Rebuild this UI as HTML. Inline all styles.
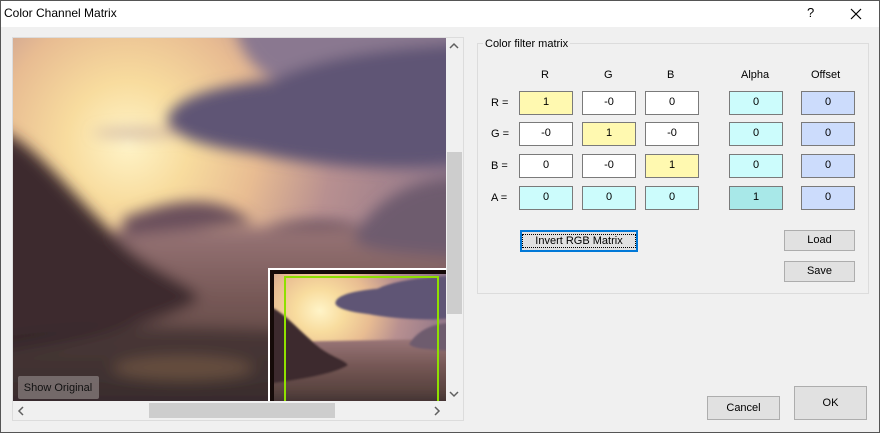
<!DOCTYPE html>
<html><head><style>
*{box-sizing:border-box;margin:0;padding:0}
body{width:880px;height:433px;background:#f0f0f0;font-family:"Liberation Sans",sans-serif;font-size:11px;color:#000;position:relative;overflow:hidden}
.frame{position:absolute;left:0;top:0;width:880px;height:433px;border:1px solid #555;pointer-events:none}
.title{position:absolute;left:0;top:0;width:880px;height:27px;background:#fff;font-size:12px}
.a{position:absolute}
.cell{position:absolute;width:54px;height:24px;border:1px solid #7a7a7a;text-align:center;line-height:21px;font-size:11px}
.y{background:#fff9b0}.w{background:#fff}.c{background:#ccfcfc}.o{background:#ccdcfc}.d{background:#a8e8e8}
.btn{position:absolute;background:#e1e1e1;border:1px solid #adadad;text-align:center;font-size:11px}
.lbl{position:absolute;font-size:11px}
</style></head><body>
<div class="title"><span class="a" style="left:4px;top:6px">Color Channel Matrix</span>
<span class="a" style="left:807px;top:5px;font-size:13px">?</span>
<svg class="a" style="left:850px;top:8px" width="12" height="12"><path d="M1 1L11 11M11 1L1 11" stroke="#000" stroke-width="1.2"/></svg></div>

<div class="a" style="left:12px;top:37px;width:452px;height:384px;border:1px solid #dcdcdc;background:#f0f0f0"></div>
<svg class="a" style="left:13px;top:38px" width="433" height="363" viewBox="0 0 433 363">
<defs>
<filter id="b" x="-20%" y="-20%" width="140%" height="140%"><feGaussianBlur stdDeviation="7"/></filter>
<filter id="b2"><feGaussianBlur stdDeviation="3"/></filter>
<radialGradient id="sun" gradientUnits="userSpaceOnUse" cx="115" cy="105" r="340">
<stop offset="0" stop-color="#fff4c8"/><stop offset="0.18" stop-color="#f8dc9e"/><stop offset="0.38" stop-color="#e8bc92"/><stop offset="0.6" stop-color="#b89090"/><stop offset="1" stop-color="#8a7288"/></radialGradient>
<linearGradient id="wat" x1="0" y1="0" x2="0" y2="1"><stop offset="0" stop-color="#9a7678"/><stop offset="0.4" stop-color="#755755"/><stop offset="0.75" stop-color="#5a4440"/><stop offset="1" stop-color="#3a2c2e"/></linearGradient>
</defs>
<rect width="433" height="363" fill="url(#sun)"/>
<g filter="url(#b)">
<path d="M220 -20L450 -20L450 40L260 40C240 30 225 10 220 -20Z" fill="#8a7890"/>
<path d="M155 80C160 60 200 48 260 42C300 22 350 12 450 5L450 125C390 135 300 128 240 115C185 108 150 95 155 80Z" fill="#5e5474"/>
<ellipse cx="125" cy="95" rx="45" ry="5" fill="#b89894" opacity="0.6"/>
<path d="M-20 195L450 185L450 380L-20 380Z" fill="url(#wat)"/>
<path d="M110 180C150 165 200 150 240 185L110 198Z" fill="#6a4f5c"/>
<path d="M250 190C280 180 330 180 350 190Z" fill="#5a4558"/>
<path d="M340 200C360 165 395 140 450 140L450 220C390 215 350 215 340 200Z" fill="#6e5c6e"/>
<path d="M-20 90C20 100 60 160 110 205C140 235 190 250 185 262C150 285 80 300 -20 315Z" fill="#3c2a2e"/>
<path d="M-20 300C100 280 200 290 450 300L450 380L-20 380Z" fill="#2e2426" opacity="0.55"/>
<ellipse cx="170" cy="330" rx="70" ry="12" fill="#8a6a4c" opacity="0.5"/>
</g>
<rect x="255" y="230" width="178" height="133" fill="#fff"/>
<rect x="257" y="232" width="176" height="131" fill="#150a08"/>
<svg x="261" y="236" width="172" height="127" viewBox="0 0 433 363" preserveAspectRatio="none">
<rect width="433" height="363" fill="url(#sun)"/>
<g filter="url(#b2)">
<path d="M155 80C160 60 200 48 260 42C300 22 350 12 450 5L450 125C390 135 300 128 240 115C185 108 150 95 155 80Z" fill="#5e5474"/>
<path d="M-20 195L450 185L450 380L-20 380Z" fill="url(#wat)"/>
<path d="M340 200C360 165 395 140 450 140L450 220C390 215 350 215 340 200Z" fill="#6e5c6e"/>
<path d="M-20 90C20 100 60 160 110 205C140 235 190 250 185 262C150 285 80 300 -20 315Z" fill="#3c2a2e"/>
</g></svg>
<rect x="272" y="239" width="153" height="130" fill="none" stroke="#8fe000" stroke-width="2"/>
<rect x="5" y="338" width="81" height="23" rx="2" fill="#7a7070" opacity="0.9"/>
<text x="45" y="353" text-anchor="middle" font-family="Liberation Sans" font-size="11" fill="#111">Show Original</text>
</svg>
<div class="a" style="left:446px;top:38px;width:17px;height:363px;background:#f0f0f0"></div>
<div class="a" style="left:447px;top:152px;width:15px;height:162px;background:#cdcdcd"></div>
<svg class="a" style="left:449px;top:42px" width="10" height="8"><path d="M1 6L5 2L9 6" fill="none" stroke="#606060" stroke-width="1.5"/></svg>
<svg class="a" style="left:449px;top:390px" width="10" height="8"><path d="M1 2L5 6L9 2" fill="none" stroke="#606060" stroke-width="1.5"/></svg>
<div class="a" style="left:149px;top:403px;width:186px;height:15px;background:#cdcdcd"></div>
<svg class="a" style="left:17px;top:406px" width="8" height="10"><path d="M6 1L2 5L6 9" fill="none" stroke="#606060" stroke-width="1.5"/></svg>
<svg class="a" style="left:433px;top:406px" width="8" height="10"><path d="M2 1L6 5L2 9" fill="none" stroke="#606060" stroke-width="1.5"/></svg>

<div class="a" style="left:477px;top:43px;width:392px;height:251px;border:1px solid #dcdcdc"></div>
<span class="a" style="left:483px;top:38px;background:#f0f0f0;padding:0 2px">Color filter matrix</span>
<span class="lbl" style="left:541px;top:69px">R</span>
<span class="lbl" style="left:604px;top:69px">G</span>
<span class="lbl" style="left:667px;top:69px">B</span>
<span class="lbl" style="left:741px;top:69px">Alpha</span>
<span class="lbl" style="left:811px;top:69px">Offset</span>
<span class="lbl" style="left:491px;top:97px">R =</span>
<span class="lbl" style="left:491px;top:128px">G =</span>
<span class="lbl" style="left:491px;top:160px">B =</span>
<span class="lbl" style="left:491px;top:192px">A =</span>

<div class="cell y" style="left:519px;top:91px">1</div><div class="cell w" style="left:582px;top:91px">-0</div><div class="cell w" style="left:645px;top:91px">0</div><div class="cell c" style="left:729px;top:91px">0</div><div class="cell o" style="left:801px;top:91px">0</div>
<div class="cell w" style="left:519px;top:122px">-0</div><div class="cell y" style="left:582px;top:122px">1</div><div class="cell w" style="left:645px;top:122px">-0</div><div class="cell c" style="left:729px;top:122px">0</div><div class="cell o" style="left:801px;top:122px">0</div>
<div class="cell w" style="left:519px;top:154px">0</div><div class="cell w" style="left:582px;top:154px">-0</div><div class="cell y" style="left:645px;top:154px">1</div><div class="cell c" style="left:729px;top:154px">0</div><div class="cell o" style="left:801px;top:154px">0</div>
<div class="cell c" style="left:519px;top:186px">0</div><div class="cell c" style="left:582px;top:186px">0</div><div class="cell c" style="left:645px;top:186px">0</div><div class="cell d" style="left:729px;top:186px">1</div><div class="cell o" style="left:801px;top:186px">0</div>

<div class="btn" style="left:520px;top:230px;width:118px;height:22px;border:2px solid #0078d7;line-height:18px"><span style="outline:1px dotted #000;padding:0 12px">Invert RGB Matrix</span></div>
<div class="btn" style="left:784px;top:230px;width:71px;height:21px;line-height:19px">Load</div>
<div class="btn" style="left:784px;top:261px;width:71px;height:21px;line-height:19px">Save</div>
<div class="btn" style="left:707px;top:396px;width:73px;height:24px;line-height:22px">Cancel</div>
<div class="btn" style="left:794px;top:386px;width:73px;height:34px;line-height:32px">OK</div>
<div class="frame"></div>
</body></html>
